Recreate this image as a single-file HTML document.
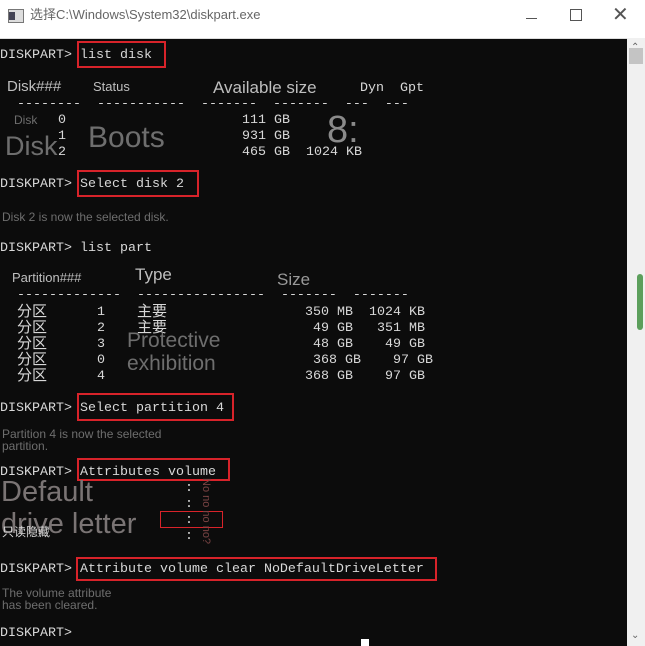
<!DOCTYPE html>
<html><head><meta charset="utf-8"><style>
body{margin:0;width:645px;height:646px;overflow:hidden;background:#0c0c0c;position:relative;font-family:"Liberation Mono","Noto Sans CJK SC",monospace;}
.t{position:absolute;white-space:pre;line-height:16px;}
.m{font-size:13.33px;color:#d8d8d8;font-family:"Liberation Mono","Noto Sans CJK SC",monospace;}
.c{font-size:15px;color:#d8d8d8;font-family:"Noto Sans CJK SC",sans-serif;letter-spacing:0px}
.g{font-family:"Liberation Sans","Noto Sans CJK SC",sans-serif;color:#6e6e6e;}
.gh{font-family:"Liberation Sans",sans-serif;color:#bfbfbf;}
.b{position:absolute;border:2px solid #d8232a;box-sizing:border-box;}
</style></head><body>
<div style="position:absolute;left:0;top:0;width:645px;height:38px;background:#fff;border-bottom:1px solid #ddd"></div>
<div style="position:absolute;left:8px;top:9px;width:14px;height:12px;border:1px solid #777;background:#ddd"></div>
<div style="position:absolute;left:9px;top:12px;width:6px;height:8px;background:#445"></div>
<div class="t" style="left:30px;top:7px;font:13px 'Liberation Sans','Noto Sans CJK SC',sans-serif;color:#666;line-height:16px">选择C:\Windows\System32\diskpart.exe</div>
<div style="position:absolute;left:526px;top:18px;width:11px;height:1px;background:#555"></div>
<div style="position:absolute;left:570px;top:9px;width:10px;height:10px;border:1px solid #555"></div>
<div class="t" style="left:612px;top:3px;font:20px 'Liberation Sans',sans-serif;color:#555;line-height:24px">✕</div>
<div style="position:absolute;left:627px;top:38px;width:18px;height:608px;background:#f0f0f0"></div>
<div class="t" style="left:631px;top:42px;font:10px 'Liberation Sans';color:#666">⌃</div>
<div style="position:absolute;left:629px;top:48px;width:14px;height:16px;background:#c4c4c4"></div>
<div style="position:absolute;left:637px;top:274px;width:6px;height:56px;background:#5c9f5c;border-radius:3px"></div>
<div class="t" style="left:631px;top:630px;font:10px 'Liberation Sans';color:#666">⌄</div>

<div class="t m" style="left:0;top:48px">DISKPART> list disk</div>
<div class="b" style="left:77px;top:41px;width:89px;height:27px"></div>
<div class="t gh" style="left:7px;top:79px;font-size:15px">Disk###</div>
<div class="t gh" style="left:93px;top:79px;font-size:13px">Status</div>
<div class="t gh" style="left:213px;top:80px;font-size:17px">Available size</div>
<div class="t m" style="left:360px;top:81px">Dyn  Gpt</div>
<div class="t m" style="left:17px;top:97px">--------  -----------  -------  -------  ---  ---</div>
<div class="t m" style="left:58px;top:113px">0</div>
<div class="t m" style="left:58px;top:129px">1</div>
<div class="t m" style="left:58px;top:145px">2</div>
<div class="t m" style="left:242px;top:113px">111 GB</div>
<div class="t m" style="left:242px;top:129px">931 GB</div>
<div class="t m" style="left:242px;top:145px">465 GB  1024 KB</div>
<div class="t g" style="left:14px;top:112px;font-size:12px">Disk</div>
<div class="t g" style="left:5px;top:130px;font-size:27px;line-height:32px">Disk</div>
<div class="t g" style="left:88px;top:120px;font-size:30px;line-height:36px">Boots</div>
<div class="t g" style="left:327px;top:108px;font-size:38px;line-height:44px;color:#8a8a8a">8:</div>

<div class="t m" style="left:0;top:177px">DISKPART> Select disk 2</div>
<div class="b" style="left:77px;top:170px;width:122px;height:27px"></div>
<div class="t g" style="left:2px;top:209px;font-size:12px">Disk 2 is now the selected disk.</div>

<div class="t m" style="left:0;top:241px">DISKPART> list part</div>
<div class="t gh" style="left:12px;top:270px;font-size:13px">Partition###</div>
<div class="t gh" style="left:135px;top:267px;font-size:17px">Type</div>
<div class="t g" style="left:277px;top:272px;font-size:17px;color:#999">Size</div>
<div class="t m" style="left:17px;top:288px">-------------  ----------------  -------  -------</div>

<div class="t c" style="left:17px;top:303px;line-height:16px">分区<br>分区<br>分区<br>分区<br>分区</div>
<div class="t m" style="left:97px;top:305px;line-height:16px">1<br>2<br>3<br>0<br>4</div>
<div class="t c" style="left:137px;top:303px;line-height:16px">主要<br>主要</div>
<div class="t m" style="left:305px;top:305px">350 MB  1024 KB</div>
<div class="t m" style="left:313px;top:321px">49 GB   351 MB</div>
<div class="t m" style="left:313px;top:337px">48 GB    49 GB</div>
<div class="t m" style="left:313px;top:353px">368 GB    97 GB</div>
<div class="t m" style="left:305px;top:369px">368 GB    97 GB</div>
<div class="t g" style="left:127px;top:329px;font-size:21px;line-height:24px">Protective</div>
<div class="t g" style="left:127px;top:352px;font-size:21px;line-height:24px">exhibition</div>

<div class="t m" style="left:0;top:401px">DISKPART> Select partition 4</div>
<div class="b" style="left:77px;top:393px;width:157px;height:28px"></div>
<div class="t g" style="left:2px;top:428px;font-size:12px;line-height:12px">Partition 4 is now the selected<br>partition.</div>

<div class="t m" style="left:0;top:465px">DISKPART> Attributes volume</div>
<div class="b" style="left:77px;top:458px;width:153px;height:23px"></div>
<div class="t g" style="left:1px;top:476px;font-size:29px;line-height:32px;color:#7a7474">Default</div>
<div class="t g" style="left:1px;top:508px;font-size:29px;line-height:32px;color:#7a7474">drive letter</div>
<div class="t m" style="left:2px;top:525px;font-size:12px">只读隐藏</div>
<div class="t m" style="left:185px;top:481px">:</div>
<div class="t m" style="left:185px;top:497px">:</div>
<div class="t m" style="left:185px;top:513px">:</div>
<div class="t m" style="left:185px;top:529px">:</div>
<div class="b" style="left:160px;top:511px;width:63px;height:17px;border-width:1px"></div>
<div class="t g" style="left:214px;top:478px;font-size:11px;color:#7a4444;transform:rotate(90deg);transform-origin:0 0">No no no no?</div>

<div class="t m" style="left:0;top:562px">DISKPART> Attribute volume clear NoDefaultDriveLetter</div>
<div class="b" style="left:76px;top:557px;width:361px;height:24px"></div>
<div class="t g" style="left:2px;top:587px;font-size:12px;line-height:12px">The volume attribute<br>has been cleared.</div>

<div class="t m" style="left:0;top:626px">DISKPART></div>
<div style="position:absolute;left:361px;top:639px;width:8px;height:7px;background:#fff"></div>
</body></html>
